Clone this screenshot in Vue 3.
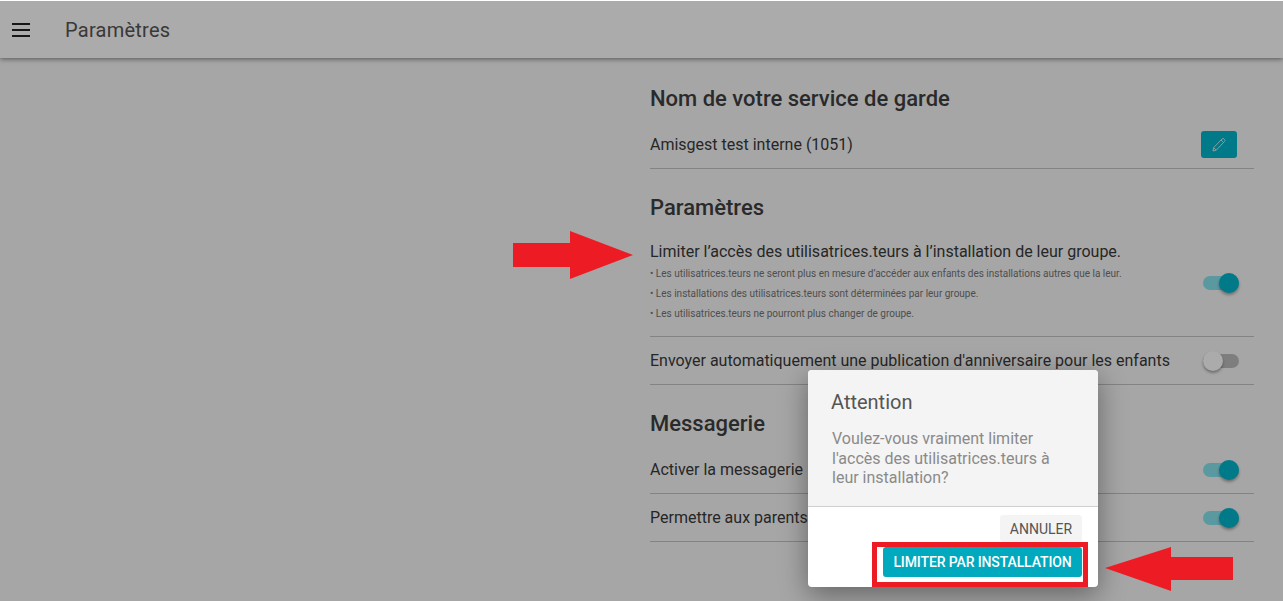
<template>
  <div class="page">
    <header class="toolbar">
      <button class="menu-btn" type="button">
        <svg width="18" height="14" viewBox="0 0 18 14">
          <path d="M0 1h18M0 7h18M0 13h18" stroke="#222" stroke-width="2" fill="none" />
        </svg>
      </button>
      <h1 class="toolbar-title">Paramètres</h1>
    </header>

    <main class="content">
      <h2 class="section-title">Nom de votre service de garde</h2>
      <div class="row">
        <span>Amisgest test interne (1051)</span>
        <button class="edit-btn" type="button">
          <svg width="14" height="15" viewBox="0 0 14 15" fill="none">
            <path
              d="M1 14l.7-3.4L10 2a1.5 1.5 0 0 1 2.1 0l.4.4a1.5 1.5 0 0 1 0 2.1L4.2 13.2zM1.7 10.6l2.5 2.6M9 3l2.5 2.6"
              stroke="#d6e6e8"
              stroke-width="1"
            />
          </svg>
        </button>
      </div>

      <h2 class="section-title section-tight">Paramètres</h2>
      <div class="row row-tall">
        <div>
          <div class="row-label">Limiter l’accès des utilisatrices.teurs à l’installation de leur groupe.</div>
          <p v-for="note in notes" :key="note" class="note">• {{ note }}</p>
        </div>
        <span class="toggle on"></span>
      </div>
      <div class="row">
        <span>Envoyer automatiquement une publication d'anniversaire pour les enfants</span>
        <span class="toggle"></span>
      </div>

      <h2 class="section-title">Messagerie</h2>
      <div class="row">
        <span>Activer la messagerie</span>
        <span class="toggle on"></span>
      </div>
      <div class="row">
        <span>Permettre aux parents</span>
        <span class="toggle on"></span>
      </div>
    </main>

    <div class="backdrop"></div>

    <div class="dialog">
      <div class="dialog-head">
        <h3 class="dialog-title">Attention</h3>
        <p class="dialog-text">Voulez-vous vraiment limiter l'accès des utilisatrices.teurs à leur installation?</p>
      </div>
      <div class="dialog-actions">
        <button class="btn-cancel" type="button">Annuler</button>
        <button class="btn-confirm" type="button">Limiter par installation</button>
      </div>
    </div>

    <!-- annotations -->
    <div class="mark-box"></div>
    <svg class="arrow arrow-right" width="120" height="48" viewBox="0 0 120 48">
      <path d="M0 12H57V0L120 24 57 48V36H0z" fill="#ed1c24" />
    </svg>
    <svg class="arrow arrow-left" width="128" height="44" viewBox="0 0 128 44">
      <path d="M128 10H66V0L0 21 66 44V33H128z" fill="#ed1c24" />
    </svg>
  </div>
</template>

<script setup>
const notes = [
  "Les utilisatrices.teurs ne seront plus en mesure d’accéder aux enfants des installations autres que la leur.",
  "Les installations des utilisatrices.teurs sont déterminées par leur groupe.",
  "Les utilisatrices.teurs ne pourront plus changer de groupe.",
];
</script>

<style>
html,
body {
  margin: 0;
  background: #f8f8f8;
  overflow: hidden;
}
</style>

<style scoped>
.page {
  position: relative;
  height: 601px;
  overflow: hidden;
  font-family: Roboto, "Liberation Sans", sans-serif;
  color: #3a3a3a;
}

.toolbar {
  display: flex;
  align-items: center;
  height: 58px;
  padding-top: 2px;
  box-sizing: border-box;
  background: #fff;
  box-shadow: 0 1px 5px rgba(0, 0, 0, 0.5);
}

.menu-btn {
  display: flex;
  width: 65px;
  padding: 0 0 0 12px;
  border: none;
  background: none;
}

.toolbar-title {
  margin: 0;
  font-size: 20px;
  font-weight: 400;
  letter-spacing: 0.25px;
  color: #555;
}

.content {
  width: 604px;
  margin-left: 650px;
  padding-top: 28px;
}

.section-title {
  margin: 26px 0 9px;
  font-size: 22px;
  line-height: 26px;
  font-weight: 500;
  color: #3f3f3f;
}

.section-title:first-child {
  margin-top: 0;
}

.section-tight {
  margin-bottom: 8px;
}

.row {
  display: flex;
  align-items: center;
  justify-content: space-between;
  box-sizing: border-box;
  height: 48px;
  font-size: 16px;
  border-bottom: 1px solid #c4c4c4;
}

.row-tall {
  height: 108px;
  padding-top: 1px;
}

.row-label {
  height: 20px;
  line-height: 20px;
  margin-bottom: 2px;
}

.note {
  margin: 0;
  font-size: 10px;
  line-height: 20px;
  color: #757575;
}

.edit-btn {
  display: flex;
  align-items: center;
  justify-content: center;
  width: 36px;
  height: 27px;
  margin-right: 17px;
  padding: 0;
  border: none;
  border-radius: 3px;
  background: #00b6cc;
}

.toggle {
  position: relative;
  display: block;
  flex: none;
  width: 36px;
  height: 14px;
  margin-right: 15px;
  border-radius: 7px;
  background: #bdbdbd;
}

.toggle::after {
  content: "";
  position: absolute;
  top: -3px;
  left: 0;
  width: 20px;
  height: 20px;
  border-radius: 50%;
  background: #fff;
  box-shadow: 0 2px 3px rgba(0, 0, 0, 0.35);
}

.toggle.on {
  background: #88e4f0;
}

.toggle.on::after {
  left: 16px;
  background: #00b6cc;
}

.backdrop {
  position: absolute;
  inset: 1px 0 0;
  background: rgba(0, 0, 0, 0.33);
}

.dialog {
  position: absolute;
  top: 370px;
  left: 808px;
  width: 290px;
  height: 217px;
  border-radius: 4px;
  overflow: hidden;
  background: #fff;
  box-shadow: 0 8px 28px rgba(0, 0, 0, 0.4);
}

.dialog-head {
  height: 137px;
  padding: 19px 24px 0;
  box-sizing: border-box;
  background: #f4f4f4;
  border-bottom: 1px solid #cfcfcf;
}

.dialog-title {
  margin: 0 0 14px -1px;
  font-size: 20px;
  line-height: 26px;
  font-weight: 400;
  color: #555;
}

.dialog-text {
  margin: 0;
  width: 232px;
  font-size: 16px;
  line-height: 19.5px;
  color: #8a8a8a;
}

.dialog-actions {
  display: flex;
  flex-direction: column;
  align-items: flex-end;
  gap: 5px;
  padding: 8px 16px 0 0;
}

.btn-cancel,
.btn-confirm {
  padding: 0;
  border: none;
  border-radius: 3px;
  font-family: inherit;
  font-size: 14px;
  text-transform: uppercase;
}

.btn-cancel {
  width: 82px;
  height: 27px;
  background: #f4f4f4;
  color: #555;
}

.btn-confirm {
  width: 199px;
  height: 30px;
  background: #00a9bd;
  color: #fff;
  font-weight: 500;
  letter-spacing: -0.12px;
}

.mark-box {
  position: absolute;
  top: 542px;
  left: 872px;
  width: 216px;
  height: 45px;
  box-sizing: border-box;
  border: 5px solid #ed1c24;
}

.arrow {
  position: absolute;
}

.arrow-right {
  top: 231px;
  left: 513px;
}

.arrow-left {
  top: 547px;
  left: 1105px;
}
</style>
